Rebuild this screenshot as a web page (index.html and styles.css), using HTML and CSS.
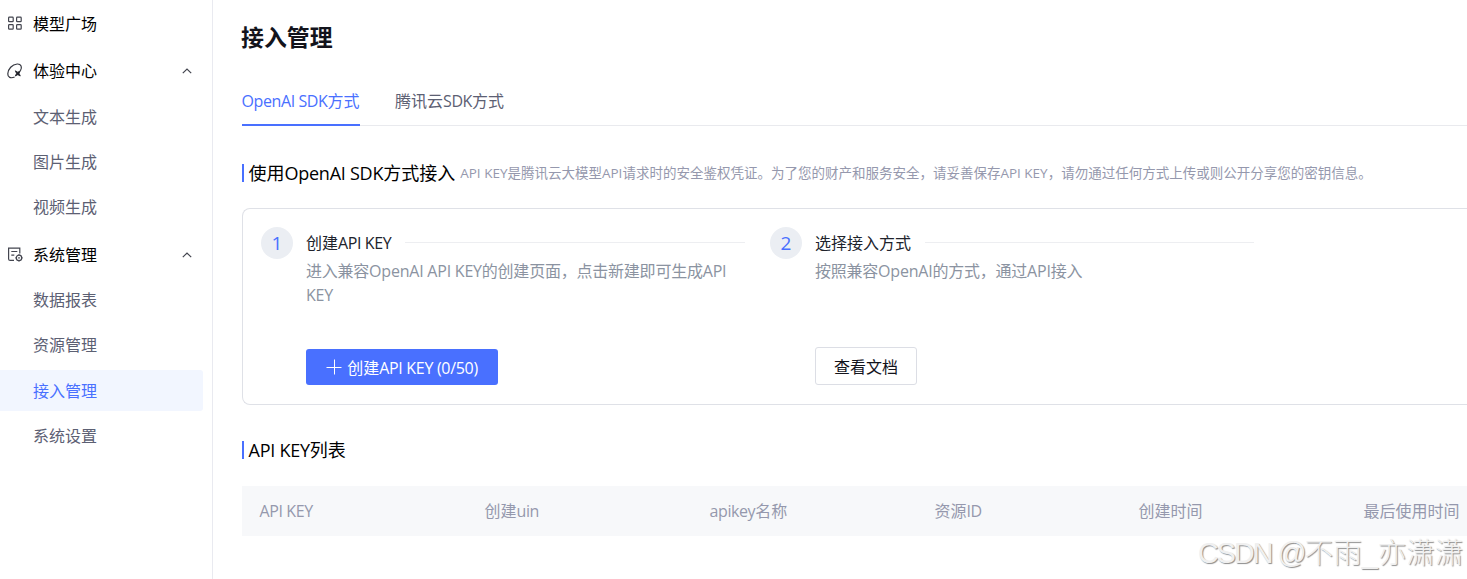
FILE: index.html
```html
<!DOCTYPE html>
<html lang="zh-CN">
<head>
<meta charset="utf-8">
<title>接入管理</title>
<link rel="stylesheet" href="styles.css">
</head>
<body>
<div class="app">
  <nav class="sidebar">
    <a class="menu-item">
      <svg class="menu-icon" viewBox="0 0 16 16"><g fill="none" stroke="#43454f" stroke-width="1.2"><rect x="1.6" y="1.1" width="4.6" height="4.6" rx=".8"/><rect x="9.6" y="1.1" width="4.6" height="4.6" rx=".8"/><rect x="1.6" y="8.6" width="4.6" height="4.6" rx=".8"/><rect x="9.6" y="8.6" width="4.6" height="4.6" rx=".8"/></g></svg>
      <span>模型广场</span>
    </a>
    <a class="menu-item">
      <svg class="menu-icon" viewBox="0 0 16 16"><path d="M7.6 14C3.8 15.700.6 14.400.8 10.700 1.100 6 5 1.400 10.200 1c4-.2 5.300 3 3.200 6.700" fill="none" stroke="#34363f" stroke-width="1.2"/><path d="M8.300 7.800l2.500 1.400 2.500-1.400-1.200 2.600 1.200 2.600-2.500-1.300-2.500 1.300 1.200-2.600z" fill="#20222a" stroke="#20222a" stroke-width=".8"/></svg>
      <span>体验中心</span>
      <svg class="chevron" viewBox="0 0 10 6"><path d="M.8 5.200L5 1l4.200 4.200" fill="none" stroke="#43454f" stroke-width="1.2"/></svg>
    </a>
    <div class="submenu">
      <a class="sub-item">文本生成</a>
      <a class="sub-item">图片生成</a>
      <a class="sub-item">视频生成</a>
    </div>
    <a class="menu-item">
      <svg class="menu-icon" viewBox="0 0 16 16"><g fill="none" stroke="#43454f" stroke-width="1.2"><path d="M7 13.400H3.200Q1.600 13.400 1.600 11.900V1.100H12.800V6.500"/><path d="M4.300 4.500h6M4.300 8.100h3"/><circle cx="12" cy="10.900" r="2.700"/></g><circle cx="12" cy="10.900" r=".8" fill="#43454f"/><path d="M12 7.300v1M12 13.500v1M8.400 10.900h1M14.600 10.900h1" stroke="#43454f" stroke-width="1.2"/></svg>
      <span>系统管理</span>
      <svg class="chevron" viewBox="0 0 10 6"><path d="M.8 5.200L5 1l4.200 4.200" fill="none" stroke="#43454f" stroke-width="1.2"/></svg>
    </a>
    <div class="submenu second">
      <a class="sub-item">数据报表</a>
      <a class="sub-item">资源管理</a>
      <a class="sub-item active">接入管理</a>
      <a class="sub-item">系统设置</a>
    </div>
  </nav>

  <main class="content">
    <h1 class="page-title">接入管理</h1>
    <div class="tabs">
      <a class="tab active"><span class="latin">OpenAI SDK</span>方式</a>
      <a class="tab">腾讯云<span class="latin">SDK</span>方式</a>
    </div>

    <div class="section-head">
      <h2 class="section-title">使用<span class="latin">OpenAI SDK</span>方式接入</h2>
      <p class="section-note"><span class="latin">API KEY</span>是腾讯云大模型<span class="latin">API</span>请求时的安全鉴权凭证。为了您的财产和服务安全，请妥善保存<span class="latin">API KEY</span>，请勿通过任何方式上传或则公开分享您的密钥信息。</p>
    </div>

    <section class="steps">
      <div class="step">
        <span class="step-number">1</span>
        <div class="step-body">
          <div class="step-head"><h3 class="step-title">创建<span class="latin">API KEY</span></h3></div>
          <p class="step-text">进入兼容OpenAI API KEY的创建页面，点击新建即可生成API KEY</p>
          <button class="button primary"><svg class="plus" viewBox="0 0 16 16"><path d="M8.500 .5v15M.5 8.500h15" stroke="#fff" stroke-width="1"/></svg><span>创建<span class="latin">API KEY (0/50)</span></span></button>
        </div>
      </div>
      <div class="step">
        <span class="step-number">2</span>
        <div class="step-body">
          <div class="step-head"><h3 class="step-title">选择接入方式</h3></div>
          <p class="step-text">按照兼容OpenAI的方式，通过API接入</p>
          <button class="button outline">查看文档</button>
        </div>
      </div>
    </section>

    <h2 class="section-title list-title"><span class="latin">API KEY</span>列表</h2>
    <div class="table-head">
      <span><span class="latin">API KEY</span></span>
      <span>创建<span class="latin">uin</span></span>
      <span><span class="latin">apikey</span>名称</span>
      <span>资源<span class="latin">ID</span></span>
      <span>创建时间</span>
      <span>最后使用时间</span>
    </div>
  </main>
  <div class="watermark"><span class="watermark-latin">CSDN @</span>不雨_亦潇潇</div>
</div>
</body>
</html>
```
FILE: styles.css
```css
* { box-sizing: border-box; margin: 0; padding: 0; }
body {
  background: #fff;
  color: #000;
  font-family: "Open Sans", "Noto Sans CJK SC", sans-serif;
  font-size: 16px;
  overflow: hidden;
}
a, h1, h2, h3, .section-note, .button { white-space: nowrap; }
.latin { letter-spacing: -0.4px; }
.app { position: relative; display: flex; width: 1467px; height: 579px; overflow: hidden; }

.sidebar { flex: none; width: 213px; border-right: 1px solid #e9eaf0; }
.menu-item {
  display: flex;
  align-items: center;
  height: 47px;
  padding: 0 20.5px 0 7px;
  line-height: 24px;
}
.menu-icon { width: 16px; height: 16px; margin-right: 10px; }
.chevron { width: 10px; height: 6px; margin-left: auto; }
.submenu { display: flex; flex-direction: column; gap: 4.3px; padding: 2.5px 9px 3px 0; }
.submenu.second { padding-top: 1.7px; }
.sub-item {
  height: 41px;
  padding-left: 33px;
  border-radius: 0 3px 3px 0;
  color: #5c6073;
  line-height: 41px;
}
.sub-item.active { background: #f2f6ff; color: #4970ff; line-height: 43px; }

.content { flex: none; width: 1254px; padding-left: 29px; }
.page-title { margin-top: 20px; font-size: 22.9px; font-weight: 700; line-height: 36px; color: #13141c; text-indent: -1px; }
.tabs { display: flex; gap: 35.5px; height: 48px; margin-top: 22px; border-bottom: 1px solid #e9eaee; }
.tab { height: 48px; line-height: 47px; color: #5c6073; text-indent: -0.5px; }
.tab.active { width: 118px; color: #4970ff; border-bottom: 2px solid #4970ff; }

.section-head { display: flex; align-items: center; gap: 5px; height: 24px; margin-top: 35px; }
.section-title { display: flex; align-items: center; font-size: 18px; font-weight: 400; line-height: 24px; }
.section-title .latin { letter-spacing: -0.25px; }
.section-title::before { content: ""; width: 2px; height: 18px; margin-right: 4.5px; background: #4970ff; }
.section-note { font-size: 13.5px; line-height: 20px; color: #9598ad; }
.section-note .latin { letter-spacing: 0; }

.steps {
  display: flex;
  height: 197px;
  margin-top: 23px;
  padding: 18px 18px 19px;
  border: 1px solid #dfe1e7;
  border-right: 0;
  border-radius: 8px 0 0 8px;
}
.step { flex: none; display: flex; width: 509px; }
.step-number {
  flex: none;
  width: 32px;
  height: 32px;
  margin-right: 13px;
  border-radius: 50%;
  background: #ebeef3;
  color: #4970ff;
  font-size: 19px;
  line-height: 32px;
  text-align: center;
}
.step-body { display: flex; flex-direction: column; align-items: flex-start; width: 439px; }
.step-head { display: flex; align-items: center; gap: 14px; width: 100%; height: 32px; }
.step-head::after { content: ""; flex: 1; height: 1px; margin-bottom: 2px; background: #edeef1; }
.step-title { font-size: 16px; font-weight: 400; line-height: 32px; color: #20232c; }
.step-text { width: 430px; height: 48px; line-height: 24px; color: #8b93a1; letter-spacing: -0.22px; }
.button {
  display: flex;
  align-items: center;
  justify-content: center;
  margin-top: auto;
  border-radius: 3px;
  font: inherit;
}
.button.primary { width: 192px; height: 36px; gap: 5px; border: 0; background: #4970ff; color: #fff; }
.button.primary .latin { letter-spacing: -0.3px; }
.button.outline { width: 102px; height: 38px; border: 1px solid #dcdee5; background: #fff; color: #13141c; }
.plus { width: 16px; height: 16px; }

.list-title { margin-top: 33px; }
.table-head {
  display: grid;
  grid-template-columns: 225px 225px 225px 204px 225px 1fr;
  height: 50px;
  margin-top: 24px;
  padding-left: 17.5px;
  background: #f7f8fa;
  color: #9598ad;
  line-height: 50px;
  white-space: nowrap;
}
.watermark {
  position: absolute;
  left: 1198px;
  top: 533px;
  color: #f0f0f0;
  font-family: "Open Sans", "Noto Sans CJK SC", sans-serif;
  font-family: "Liberation Sans", "Noto Sans CJK SC", sans-serif;
  font-size: 28.6px;
  font-weight: 300;
  line-height: 40px;
  white-space: nowrap;
  text-shadow: 1px 1px 1px #8c8c8c;
}
.watermark-latin { letter-spacing: -1.9px; }
```
